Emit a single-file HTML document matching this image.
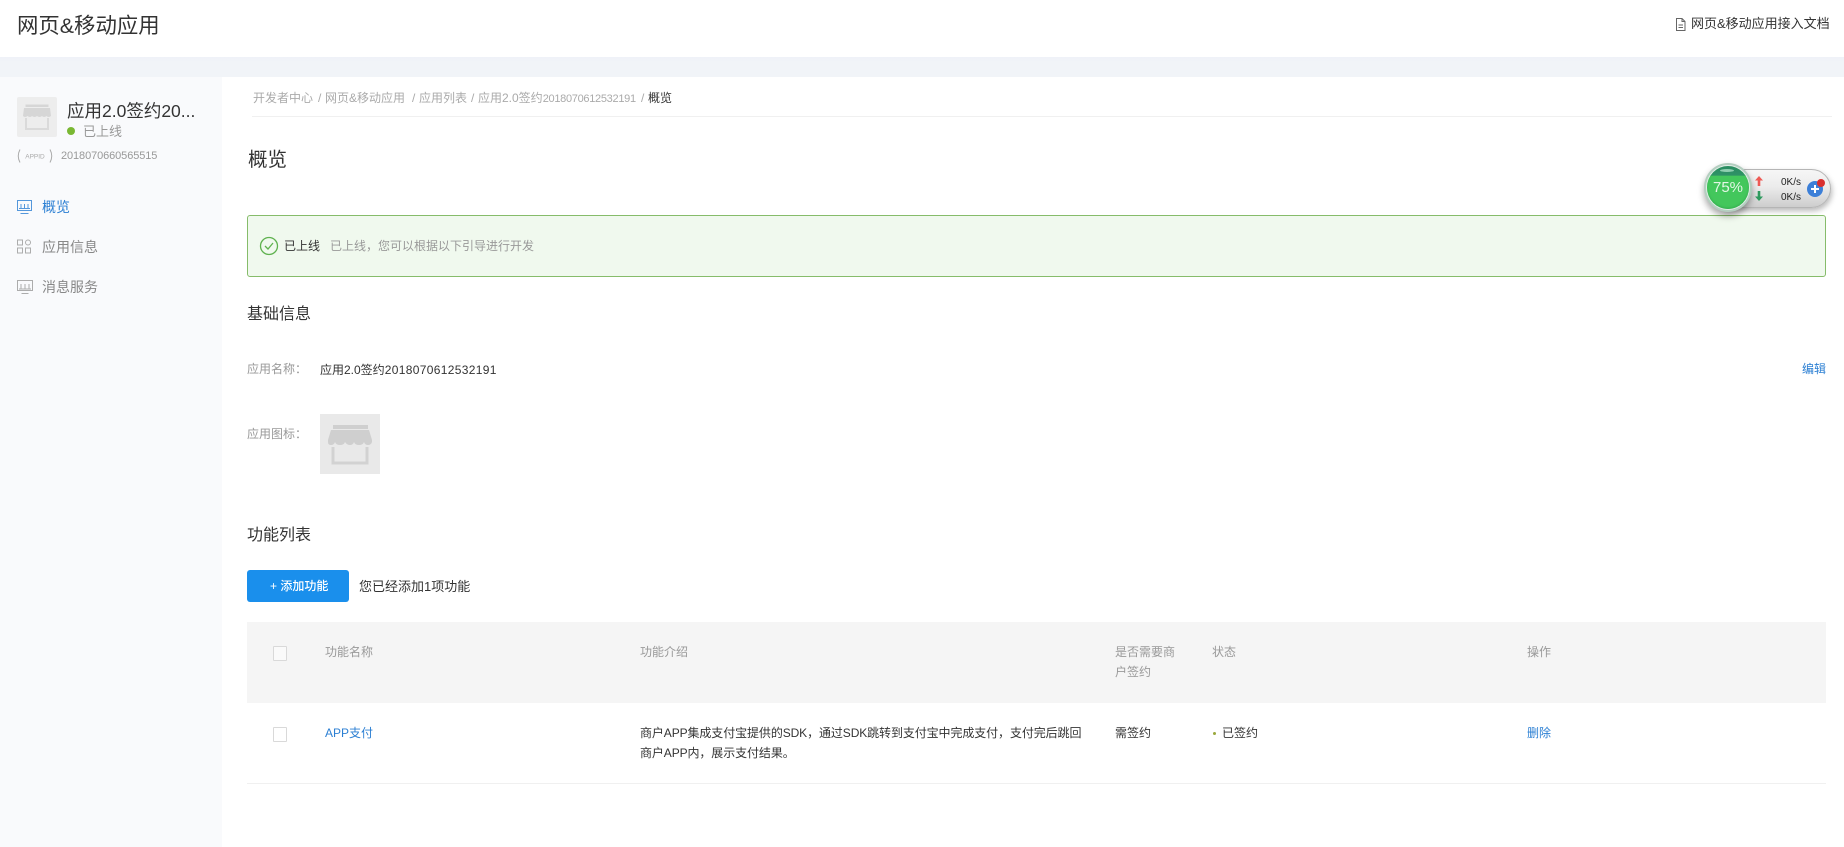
<!DOCTYPE html>
<html lang="zh"><head><meta charset="utf-8"><title>网页&amp;移动应用</title>
<style>
*{box-sizing:border-box}
html,body{margin:0;padding:0;background:#fff}
body{width:1844px;height:847px;position:relative;overflow:hidden;font-family:"Liberation Sans","Noto Sans CJK SC",sans-serif;font-size:12px;color:#333}
.a{position:absolute;white-space:nowrap;line-height:20px;height:20px}
.g{color:#999}.b{color:#2b7fd3}
svg{position:absolute;display:block}
.cb{position:absolute;width:14px;height:15px;border:1px solid #d9d9d9;background:#fafafa;border-radius:1px}
.d{letter-spacing:.33px}
.bc{color:#aaa;top:88px}
</style></head><body>
<div style="position:absolute;left:0;top:57px;width:1844px;height:20px;background:linear-gradient(#eff1f8,#f1f4f8 25%,#f1f4f8)"></div>
<div style="position:absolute;left:0;top:77px;width:222px;height:770px;background:#f9fafc"></div>

<div class="a" style="left:17px;top:12px;height:28px;line-height:28px;font-size:21.400px;color:#333">网页&amp;移动应用</div>
<svg style="left:1675px;top:18px" width="11" height="13" viewBox="0 0 11 13" fill="none" stroke="#666" stroke-width="1"><path d="M1.500.5h5.500l3 3v9h-8.500zM7 .5v3h3M3.500 7h4.500M3.500 9.500h4.500"/></svg>
<div class="a" style="left:1691px;top:14px;font-size:13px;color:#333">网页&amp;移动应用接入文档</div>

<svg style="left:17px;top:97px" width="40" height="40" viewBox="0 0 40 40"><rect width="40" height="40" rx="2" fill="#ededed"/><g fill="#d6d6d6"><rect x="8.500" y="7.500" width="23" height="2.500"/><path d="M7 11h26l1 8q-2.500 2-4.500 0-2.500 2-4.500 0-2.500 2-5 0-2.500 2-5 0-2 2-4.500 0-2.500 2-4.500 0z"/></g><path d="M9 21v11h22V21" fill="none" stroke="#dadada" stroke-width="2"/></svg>
<div class="a" style="left:67px;top:99px;height:24px;line-height:24px;font-size:17.500px;color:#333">应用2.0签约20...</div>
<div style="position:absolute;left:67px;top:127px;width:8px;height:8px;border-radius:50%;background:#7ab833"></div>
<div class="a g" style="left:83px;top:122px;font-size:13px">已上线</div>
<svg style="left:16px;top:148px" width="38" height="16" viewBox="0 0 38 16"><path d="M4 1.500Q.5 8 4 14.500M34 1.500Q37.500 8 34 14.500" fill="none" stroke="#aaa" stroke-width="1"/><text x="19" y="10.500" font-family="Liberation Sans,sans-serif" font-size="6.500" fill="#aaa" text-anchor="middle">APPID</text></svg>
<div class="a g" style="left:61px;top:146px;font-size:11px;letter-spacing:-.1px">2018070660565515</div>

<svg style="left:17px;top:199px;opacity:.8" width="15" height="16" viewBox="0 0 15 16" fill="none" stroke="#2b7fd3"><path d="M.5 1.500h14v10H.5zM3.500 14.500h8M4 5v4M7.500 5v4M11 5v4M2 9.500h11"/></svg>
<div class="a b" style="left:42px;top:197px;font-size:14px">概览</div>
<svg style="left:17px;top:239px;opacity:.8" width="14" height="15" viewBox="0 0 14 15" fill="none" stroke="#999"><path d="M.5 1h5v5h-5zM.5 9h5v5h-5zM8.500 9h5v5h-5z"/><circle cx="11" cy="3.500" r="2.500"/></svg>
<div class="a" style="left:42px;top:237px;font-size:14px;color:#888">应用信息</div>
<svg style="left:17px;top:279px;opacity:.8" width="16" height="16" viewBox="0 0 16 16" fill="none" stroke="#999"><path d="M.5 1.500h15v10H.5zM4.500 14.500h7M4 5v5M8 5v5M12 5v5M2 10h12"/></svg>
<div class="a" style="left:42px;top:277px;font-size:14px;color:#888">消息服务</div>

<div class="a bc" style="left:253px">开发者中心</div>
<div class="a bc" style="left:318px">/</div>
<div class="a bc" style="left:325px">网页&amp;移动应用</div>
<div class="a bc" style="left:412px">/</div>
<div class="a bc" style="left:419px">应用列表</div>
<div class="a bc" style="left:471px">/</div>
<div class="a bc" style="left:478px">应用2.0签约<span style="font-size:11px;letter-spacing:-.3px">2018070612532191</span></div>
<div class="a bc" style="left:641px">/</div>
<div class="a" style="left:648px;top:88px;color:#333">概览</div>
<div style="position:absolute;left:252px;top:116px;width:1580px;height:1px;background:#f0f0f0"></div>
<div class="a" style="left:248px;top:146px;height:28px;line-height:28px;font-size:19.500px;color:#333">概览</div>

<div style="position:absolute;left:247px;top:215px;width:1579px;height:62px;background:#f0f9ee;border:1px solid #86bc6a;border-radius:3px"></div>
<svg style="left:259px;top:236px" width="20" height="20" viewBox="0 0 20 20" fill="none" stroke="#5fb24f" stroke-width="1.300"><circle cx="10" cy="10" r="8.500"/><path d="M6 10l3 3 5-6"/></svg>
<div class="a" style="left:284px;top:236px;color:#333">已上线</div>
<div class="a g" style="left:330px;top:236px">已上线，您可以根据以下引导进行开发</div>

<!-- widget -->
<div style="position:absolute;left:1724px;top:169px;width:107px;height:39px;border-radius:0 20px 20px 0;background:linear-gradient(#f6f6f6,#ececec 45%,#cdcdcd);border:1px solid #b5b5b5;box-shadow:1px 3px 6px rgba(0,0,0,.28)"></div>
<div style="position:absolute;left:1704px;top:163px;width:48px;height:49px;border-radius:50%;background:#e2eee8;border:2px solid #b4cec0;box-shadow:0 4px 7px rgba(0,0,0,.35)"></div>
<div style="position:absolute;left:1707px;top:166px;width:42px;height:43px;border-radius:50%;overflow:hidden;background:linear-gradient(#2a8a62 0,#2f9366 22%,#43c75c 23%,#43c75c 100%);box-shadow:inset 0 -1px 2px #35ac50"></div>
<div style="position:absolute;left:1720px;top:169px;width:14px;height:3px;border-radius:50%;background:#8fcfb0"></div>
<div class="a" style="left:1707px;top:178px;width:42px;text-align:center;font-size:15px;color:#e4f7e6">75%</div>
<svg style="left:1755px;top:176px" width="8" height="10" viewBox="0 0 8 10"><path d="M4 0L8 4.500H5.300V10H2.700V4.500H0z" fill="#ee5a55"/></svg>
<svg style="left:1755px;top:191px" width="8" height="10" viewBox="0 0 8 10"><path d="M4 10L8 5.500H5.300V0H2.700V5.500H0z" fill="#2f9a5e"/></svg>
<div class="a" style="left:1776px;top:172px;width:25px;text-align:right;font-size:10px;color:#222;height:18px;line-height:18px;margin-top:2px">0K/s</div>
<div class="a" style="left:1776px;top:187px;width:25px;text-align:right;font-size:10px;color:#222;height:18px;line-height:18px;margin-top:2px">0K/s</div>
<div style="position:absolute;left:1807px;top:181px;width:16px;height:16px;border-radius:50%;background:#3c7fd8"></div>
<svg style="left:1807px;top:181px" width="16" height="16" viewBox="0 0 16 16"><path d="M8 4v8M4 8h8" stroke="#fff" stroke-width="2"/></svg>
<div style="position:absolute;left:1817px;top:179px;width:8px;height:8px;border-radius:50%;background:#d92f2f"></div>

<div class="a" style="left:247px;top:302px;height:26px;line-height:26px;font-size:16px;color:#333">基础信息</div>
<div class="a g" style="left:247px;top:359px">应用名称：</div>
<div class="a" style="left:320px;top:360px">应用2.0签约<span class="d">2018070612532191</span></div>
<div class="a b" style="left:1802px;top:359px">编辑</div>
<div class="a g" style="left:247px;top:424px">应用图标：</div>
<svg style="left:320px;top:414px" width="60" height="60" viewBox="0 0 60 60"><rect width="60" height="60" fill="#e9e9e9"/><g fill="#cfcfcf"><rect x="13" y="11" width="35" height="4"/><path d="M11 16h38l3 10v2q-1 3-4 3t-4-3q-1 3-5 3t-5-3q-1 3-4 3t-5-3q-1 3-5 3t-5-3q-1 3-4 3t-3-3v-2z"/></g><path d="M13 33v16h34V33" fill="none" stroke="#d2d2d2" stroke-width="3"/></svg>

<div class="a" style="left:247px;top:523px;height:26px;line-height:26px;font-size:16px;color:#333">功能列表</div>
<div style="position:absolute;left:247px;top:570px;width:102px;height:32px;border-radius:3px;background:#1a8fec"></div>
<div class="a" style="left:270px;top:576px;color:#fff;font-weight:500">+ 添加功能</div>
<div class="a" style="left:359px;top:577px;font-size:13px;color:#333">您已经添加1项功能</div>

<div style="position:absolute;left:247px;top:622px;width:1579px;height:81px;background:#f5f5f5"></div>
<div class="cb" style="left:273px;top:646px"></div>
<div class="a g" style="left:325px;top:642px">功能名称</div>
<div class="a g" style="left:640px;top:642px">功能介绍</div>
<div class="a g" style="left:1115px;top:642px">是否需要商</div>
<div class="a g" style="left:1115px;top:662px">户签约</div>
<div class="a g" style="left:1212px;top:642px">状态</div>
<div class="a g" style="left:1527px;top:642px">操作</div>

<div class="cb" style="left:273px;top:727px;background:#fff"></div>
<div class="a b" style="left:325px;top:723px">APP支付</div>
<div class="a" style="left:640px;top:723px;color:#333;letter-spacing:-.1px">商户APP集成支付宝提供的SDK，通过SDK跳转到支付宝中完成支付，支付完后跳回</div>
<div class="a" style="left:640px;top:743px;color:#333;letter-spacing:-.1px">商户APP内，展示支付结果。</div>
<div class="a" style="left:1115px;top:723px;color:#333">需签约</div>
<div style="position:absolute;left:1213px;top:732px;width:3px;height:3px;border-radius:50%;background:#9aa83c"></div>
<div class="a" style="left:1222px;top:723px;color:#333">已签约</div>
<div class="a b" style="left:1527px;top:723px">删除</div>
<div style="position:absolute;left:247px;top:783px;width:1579px;height:1px;background:#f0f0f0"></div>
</body></html>
